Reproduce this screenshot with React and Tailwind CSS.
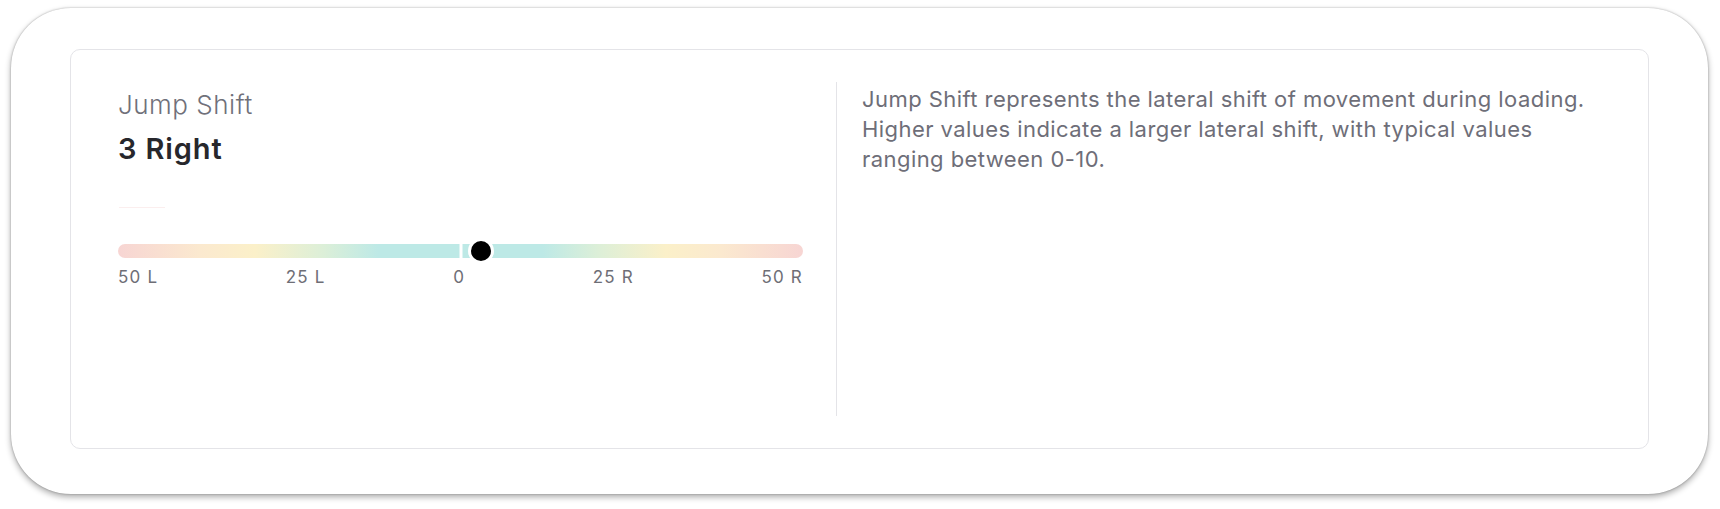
import React from "react";

const font = { fontFamily: "Inter, 'Noto Sans', sans-serif" };

function ShiftBar({ value }) {
  const pct = ((value + 50) / 100) * 100;
  return (
    <div className="relative w-[685px] h-[14px] rounded-full bg-[linear-gradient(to_right,#f7d5d3_0%,#fbe9cf_12%,#fbf0c9_20%,#dcefd8_30%,#bde9e6_38%,#bde9e6_62%,#dcefd8_70%,#fbf0c9_80%,#fbe9cf_88%,#f7d5d3_100%)]">
      <div className="absolute left-1/2 top-0 h-[14px] w-[3px] -translate-x-1/2 bg-white" />
      <div
        className="absolute top-[-6px] h-[26px] w-[26px] rounded-full border-[3px] border-white bg-black"
        style={{ left: `calc(${pct}% - 13px)` }}
      />
    </div>
  );
}

export default function App() {
  return (
    <div className="w-[1720px] h-[509px] bg-white pt-[8px] pl-[11px]" style={font}>
      <div className="w-[1697px] h-[486px] rounded-[60px] bg-white pt-[41px] pl-[59px] shadow-[0_3px_6px_rgba(0,0,0,0.33),0_0_2px_rgba(0,0,0,0.3)]">
        <div className="flex w-[1579px] h-[400px] rounded-[10px] border border-[#e4e4e8] py-[32px]">
          <div className="w-[765px] pl-[47px] pt-[5px]">
            <div className="text-[26px] leading-[36px] font-light text-[#70707a] tracking-[0.02em]">Jump Shift</div>
            <div className="mt-[8px] text-[29px] leading-[36px] font-semibold text-[#27272c] tracking-[0.03em]">3 Right</div>
            <div className="mt-[40px] ml-[1px] h-px w-[46px] bg-[#fbeeee]" />
            <div className="mt-[36px]">
              <ShiftBar value={3} />
            </div>
            <div className="mt-[7px] flex w-[685px] justify-between text-[17px] leading-[24px] tracking-[0.07em] text-[#6e6e76]">
              <span>50 L</span>
              <span>25 L</span>
              <span>0</span>
              <span>25 R</span>
              <span>50 R</span>
            </div>
          </div>
          <div className="flex-1 border-l border-[#e4e4e8] pl-[25px] pt-[2px]">
            <p className="w-[752px] text-[22px] leading-[30px] tracking-[0.02em] text-[#6e6e78]">
              Jump Shift represents the lateral shift of movement during loading. Higher values indicate a larger lateral shift, with typical values ranging between 0-10.
            </p>
          </div>
        </div>
      </div>
    </div>
  );
}
